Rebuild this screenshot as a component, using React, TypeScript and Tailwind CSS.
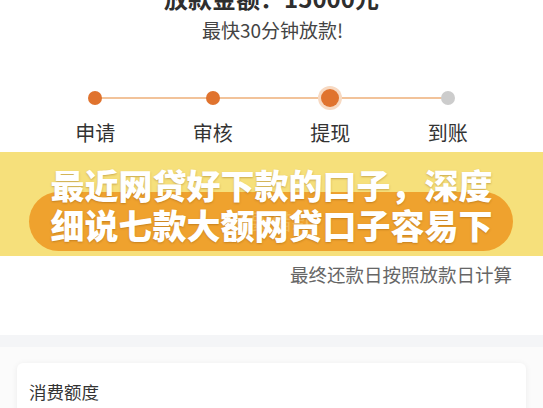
import React from "react";

const steps = [
  { label: "申请", state: "done" },
  { label: "审核", state: "done" },
  { label: "提现", state: "active" },
  { label: "到账", state: "todo" },
];

export default function App() {
  return (
    <div className="w-[543px] h-[408px] overflow-hidden bg-white font-['Noto_Sans_CJK_SC','Noto_Sans',sans-serif] text-[#333]">
      <div className="mt-[-17px] h-[30px] text-center text-[24px] leading-[30px] font-bold text-[#2e2e2e]">
        放款金额：15000元
      </div>
      <div className="mt-[4px] pl-[2px] text-center text-[19px] leading-[26px] text-[#444]">
        最快30分钟放款!
      </div>

      <div className="relative mx-auto mt-[43px] w-[470px]">
        <div className="absolute left-[59px] right-[59px] top-[11px] h-[2px] bg-[#f2c39a]" />
        <div className="relative grid grid-cols-4">
          {steps.map((s) => (
            <div key={s.label} className="flex flex-col items-center">
              <div className="flex h-[24px] items-center justify-center">
                {s.state === "active" ? (
                  <div className="flex h-[24px] w-[24px] items-center justify-center rounded-full bg-[#f7d9c2]">
                    <div className="h-[18px] w-[18px] rounded-full bg-[#e0732e]" />
                  </div>
                ) : (
                  <div
                    className={
                      s.state === "done"
                        ? "h-[14px] w-[14px] rounded-full bg-[#e0732e]"
                        : "h-[14px] w-[14px] rounded-full bg-[#cccccc]"
                    }
                  />
                )}
              </div>
              <div className="mt-[10px] text-[20px] leading-[26px] text-[#333]">{s.label}</div>
            </div>
          ))}
        </div>
      </div>

      <div className="relative mt-[6px] h-[104px] bg-[#f6e07b]">
        <div className="absolute left-[29px] right-[30px] top-[40px] h-[59px] rounded-full bg-[#efa22e]">
          <div className="pt-[14px] text-center text-[21px] leading-[28px] text-[#f6c46a] opacity-70">
            我要借款
          </div>
        </div>
        <div className="relative pt-[13px] text-center text-[34px] leading-[40px] font-black text-white [text-shadow:0_1px_2px_rgba(120,70,0,0.35)]">
          <div>最近网贷好下款的口子，深度</div>
          <div>细说七款大额网贷口子容易下</div>
        </div>
      </div>

      <div className="mt-[5px] pr-[31px] text-right text-[18.5px] leading-[26px] text-[#666]">
        最终还款日按照放款日计算
      </div>

      <div className="mt-[48px] h-[12px] bg-[#f4f5f7]" />
      <div className="h-[80px] bg-[#fbfbfb] px-[17px] pt-[16px]">
        <div className="h-[80px] rounded-md bg-white pl-[12px] pt-[17px] shadow-[0_1px_6px_rgba(0,0,0,0.07)]">
          <div className="text-[17.5px] leading-[24px] text-[#333]">消费额度</div>
        </div>
      </div>
    </div>
  );
}
